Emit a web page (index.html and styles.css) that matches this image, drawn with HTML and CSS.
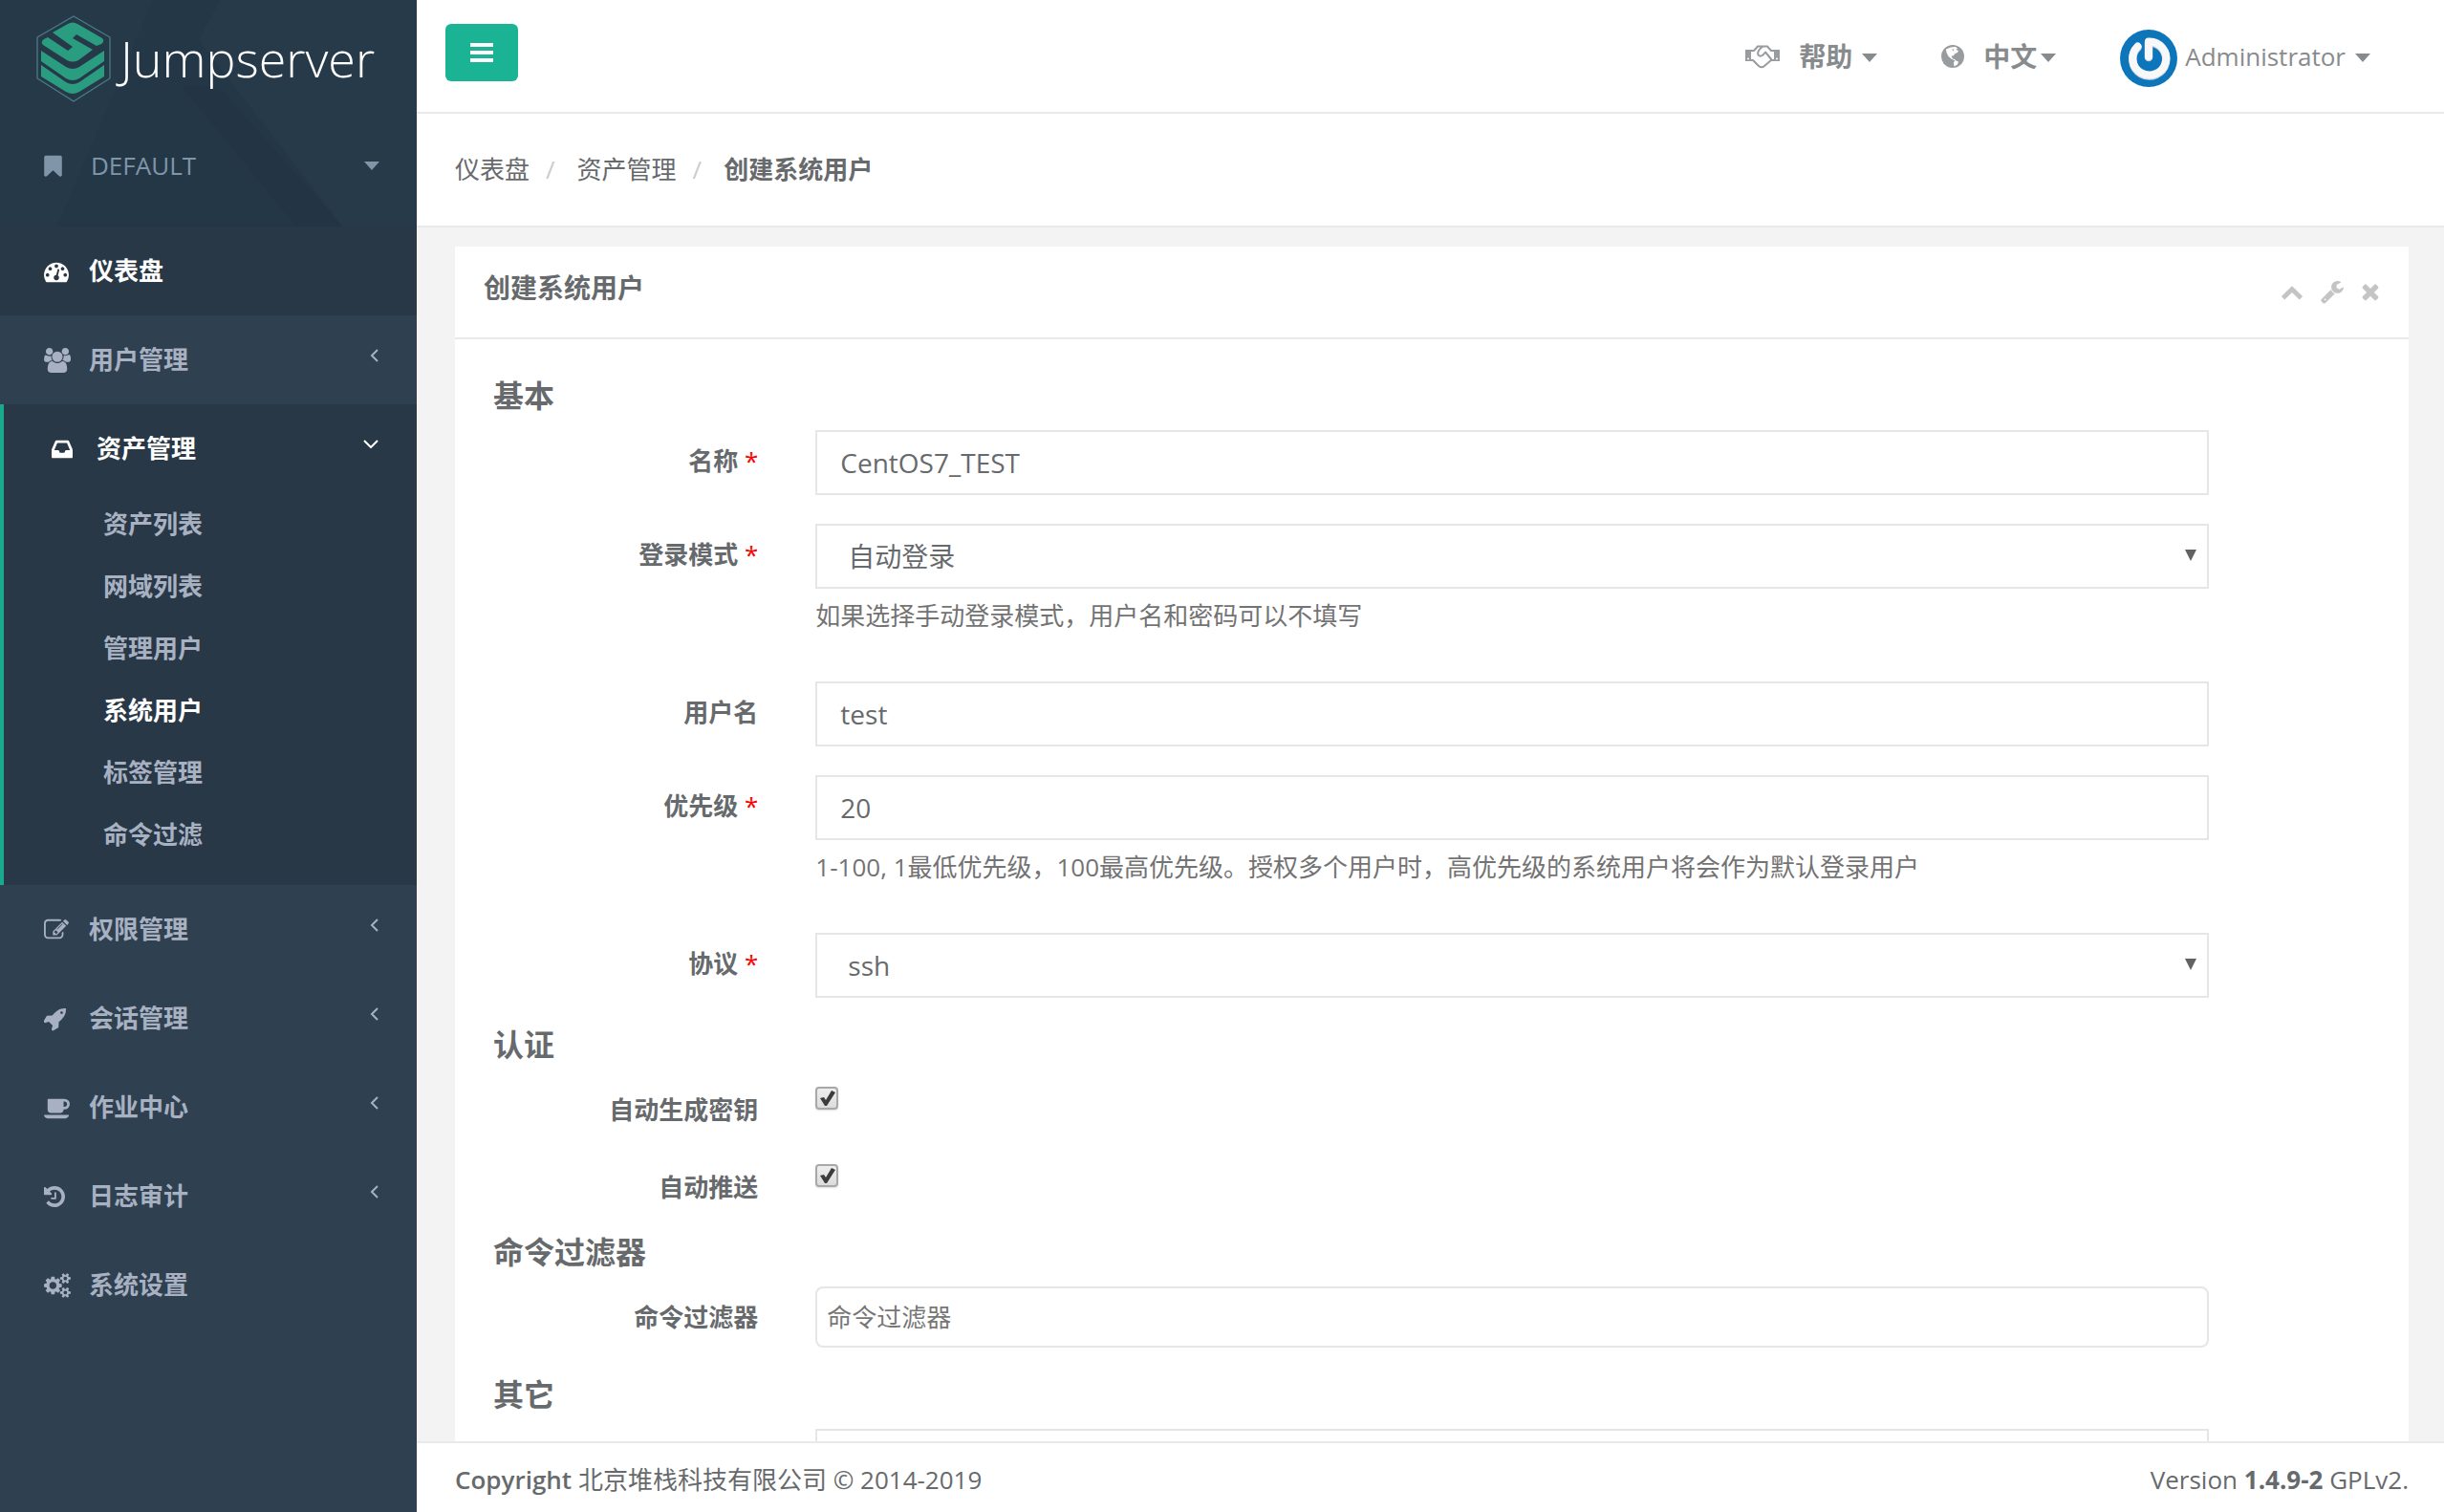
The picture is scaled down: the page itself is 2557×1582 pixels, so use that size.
FILE: index.html
```html
<!DOCTYPE html>
<html lang="zh-CN">
<head>
<meta charset="utf-8">
<title>创建系统用户 - Jumpserver</title>
<link rel="stylesheet" href="styles.css">
</head>
<body>
<div class="app">
  <aside class="sidebar">
    <header class="brand">
      <svg class="brand-bg" viewBox="0 0 436 237" preserveAspectRatio="none" aria-hidden="true">
        <rect width="436" height="237" fill="#243747"/>
        <path d="M230 0H436V237H358L208 42Z" fill="#263a4a"/>
        <path d="M0 0H160L60 237H0Z" fill="#253949"/>
        <path d="M228 90L358 237H310L190 90Z" fill="#233545"/>
      </svg>
      <a class="logo" href="#">
        <svg class="logo-mark" viewBox="0 0 100 104" aria-hidden="true">
          <path d="M47 8L85 30V73L47 97L9 73V30Z" fill="none" stroke="#4b7d86" stroke-width="1.3"/>
          <g fill="#2a9d81">
            <path d="M25 25L41 16Q46 13 51 16L77 31Q80 34 76 37L71 39L50 27L46 31L67 43L52 54Q46 57 40 54L15 38Q12 35 16 32L20 30L41 44L46 40Z"/>
            <path d="M13 44L39 61Q46 65 53 61L79 44V55L53 73Q46 77 39 73L13 55Z"/>
            <path d="M13 59L39 77Q46 81 53 77L79 59V71L53 87Q46 91 39 87L13 71Z"/>
          </g>
        </svg>
        <span class="logo-text">Jumpserver</span>
      </a>
      <button class="org" type="button">
        <svg class="icon" width="19" height="26" viewBox="256 0 1280 1792" aria-hidden="true"><path d="M1420 128q23 0 44 9 33 13 52.500 41t19.500 62v1289q0 34-19.500 62t-52.500 41q-19 8-44 8-48 0-83-32l-441-424-441 424q-36 33-83 33-23 0-44-9-33-13-52.500-41t-19.500-62v-1289q0-34 19.500-62t52.500-41q21-9 44-9h1048z"/></svg>
        <span class="org-name">DEFAULT</span>
        <svg class="caret" viewBox="0 0 16 9" aria-hidden="true"><path d="M0 0H16L8 9Z"/></svg>
      </button>
    </header>
    <nav>
      <ul class="menu">
        <li class="current"><a class="menu-link" href="#"><span class="slot"><svg class="icon" width="26" height="26" viewBox="0 0 1792 1792" aria-hidden="true"><path d="M384 1152q0-53-37.500-90.500t-90.500-37.500-90.500 37.500-37.500 90.500 37.500 90.500 90.500 37.500 90.500-37.500 37.500-90.500zm192-448q0-53-37.500-90.500t-90.500-37.500-90.500 37.500-37.500 90.500 37.500 90.500 90.500 37.500 90.500-37.500 37.500-90.500zm428 481l101-382q6-26-7.500-48.500t-38.500-29.500-48 6.500-30 39.500l-101 382q-60 5-107 43.500t-63 98.500q-20 77 20 146t117 89 146-20 89-117q16-60-6-117t-72-91zm660-33q0-53-37.500-90.500t-90.500-37.500-90.500 37.500-37.500 90.500 37.500 90.500 90.500 37.500 90.500-37.500 37.500-90.500zm-640-640q0-53-37.500-90.500t-90.500-37.500-90.500 37.500-37.500 90.500 37.500 90.500 90.500 37.500 90.500-37.500 37.500-90.500zm448 192q0-53-37.500-90.500t-90.500-37.500-90.500 37.500-37.500 90.500 37.500 90.500 90.500 37.500 90.500-37.500 37.500-90.500zm320 448q0 261-141 483-19 29-54 29h-1402q-35 0-54-29-141-221-141-483 0-182 71-348t191-286 286-191 348-71 348 71 286 191 191 286 71 348z"/></svg></span><span>仪表盘</span></a></li>
        <li><a class="menu-link" href="#"><span class="slot"><svg class="icon" width="28" height="26" viewBox="0 0 1920 1792" aria-hidden="true"><path d="M593 896q-162 5-265 128h-134q-82 0-138-40.500t-56-118.500q0-353 124-353 6 0 43.500 21t97.500 42.500 119 21.500q67 0 133-23-5 37-5 66 0 159 93 291zm1071 637q0 120-73 189.500t-194 69.500h-874q-121 0-194-69.500t-73-189.500q0-53 3.500-103.500t14-109 26.500-108.500 43-97.500 62-81 85.500-53.500 111.500-20q10 0 43 21.500t73 48 107 48 135 21.500 135-21.500 107-48 73-48 43-21.500q61 0 111.500 20t85.500 53.500 62 81 43 97.500 26.500 108.500 14 109 3.500 103.500zm-1024-1277q0 106-75 181t-181 75-181-75-75-181 75-181 181-75 181 75 75 181zm704 384q0 159-112.500 271.500t-271.500 112.500-271.500-112.500-112.500-271.500 112.500-271.500 271.500-112.500 271.500 112.500 112.500 271.500zm576 225q0 78-56 118.500t-138 40.500h-134q-103-123-265-128 93-132 93-291 0-29-5-66 66 23 133 23 59 0 119-21.500t97.500-42.500 43.500-21q124 0 124 353zm-128-609q0 106-75 181t-181 75-181-75-75-181 75-181 181-75 181 75 75 181z"/></svg></span><span>用户管理</span><svg class="arrow" width="9" height="16" viewBox="0 0 9 16" aria-hidden="true"><path d="M8 2L2 8L8 14"/></svg></a></li>
        <li class="open">
          <a class="menu-link" href="#"><span class="slot"><svg class="icon" width="22" height="26" viewBox="128 0 1536 1792" aria-hidden="true"><path d="M1151 960h316q-1-3-2.500-8.500t-2.500-7.500l-212-496h-708l-212 496q-1 3-2.500 8.500t-2.500 7.500h316l95 192h320zm513 30v482q0 26-19 45t-45 19h-1408q-26 0-45-19t-19-45v-482q0-62 25-123l238-552q10-25 36.500-42t52.500-17h832q26 0 52.500 17t36.500 42l238 552q25 61 25 123z"/></svg></span><span>资产管理</span><svg class="arrow" width="16" height="9" viewBox="0 0 16 9" aria-hidden="true"><path d="M1 1L8 8L15 1"/></svg></a>
          <ul class="submenu">
            <li><a href="#">资产列表</a></li>
            <li><a href="#">网域列表</a></li>
            <li><a href="#">管理用户</a></li>
            <li><a class="selected" href="#">系统用户</a></li>
            <li><a href="#">标签管理</a></li>
            <li><a href="#">命令过滤</a></li>
          </ul>
        </li>
        <li><a class="menu-link" href="#"><span class="slot"><svg class="icon" width="26" height="26" viewBox="0 0 1792 1792" aria-hidden="true"><path d="M888 1184l116-116-152-152-116 116v56h96v96h56zm440-720q-16-16-33 1l-350 350q-17 17-1 33t33-1l350-350q17-17 1-33zm80 594v190q0 119-84.500 203.500t-203.500 84.500h-832q-119 0-203.500-84.500t-84.500-203.500v-832q0-119 84.500-203.500t203.500-84.500h832q63 0 117 25 15 7 18 23 3 17-9 29l-49 49q-14 14-32 8-23-6-45-6h-832q-66 0-113 47t-47 113v832q0 66 47 113t113 47h832q66 0 113-47t47-113v-126q0-13 9-22l64-64q15-15 35-7t20 29zm-96-738l288 288-672 672h-288v-288zm444 132l-92 92-288-288 92-92q28-28 68-28t68 28l152 152q28 28 28 68t-28 68z"/></svg></span><span>权限管理</span><svg class="arrow" width="9" height="16" viewBox="0 0 9 16" aria-hidden="true"><path d="M8 2L2 8L8 14"/></svg></a></li>
        <li><a class="menu-link" href="#"><span class="slot"><svg class="icon" width="24" height="26" viewBox="64 0 1664 1792" aria-hidden="true"><path d="M1440 448q0-40-28-68t-68-28-68 28-28 68 28 68 68 28 68-28 28-68zm224-288q0 249-75.500 430.500t-253.500 360.500q-81 80-195 176l-20 379q-2 16-16 26l-384 224q-7 4-16 4-12 0-23-9l-64-64q-13-14-8-32l85-276-281-281-276 85q-3 1-9 1-14 0-23-9l-64-64q-17-19-5-39l224-384q10-14 26-16l379-20q96-114 176-195 188-187 358-258t431-71q14 0 24 9.500t10 22.500z"/></svg></span><span>会话管理</span><svg class="arrow" width="9" height="16" viewBox="0 0 9 16" aria-hidden="true"><path d="M8 2L2 8L8 14"/></svg></a></li>
        <li><a class="menu-link" href="#"><span class="slot"><svg class="icon" width="28" height="26" viewBox="0 0 1920 1792" aria-hidden="true"><path d="M1664 640q0-80-56-136t-136-56h-64v384h64q80 0 136-56t56-136zm-1664 768h1792q0 106-75 181t-181 75h-1280q-106 0-181-75t-75-181zm1856-768q0 159-112.500 271.500t-271.500 112.500h-64v32q0 92-66 158t-158 66h-704q-92 0-158-66t-66-158v-736q0-26 19-45t45-19h1152q159 0 271.500 112.500t112.500 271.500z"/></svg></span><span>作业中心</span><svg class="arrow" width="9" height="16" viewBox="0 0 9 16" aria-hidden="true"><path d="M8 2L2 8L8 14"/></svg></a></li>
        <li><a class="menu-link" href="#"><span class="slot"><svg class="icon" width="22" height="26" viewBox="128 0 1536 1792" aria-hidden="true"><path d="M1664 896q0 156-61 298t-164 245-245 164-298 61q-172 0-327-72.500t-264-204.500q-7-10-6.500-22.500t8.500-20.500l137-138q10-9 25-9 16 2 23 12 73 95 179 147t225 52q104 0 198.500-40.500t163.500-109.500 109.500-163.500 40.500-198.500-40.500-198.500-109.500-163.500-163.500-109.500-198.500-40.500q-98 0-188 35.500t-160 101.500l137 138q31 30 14 69-17 40-59 40h-448q-26 0-45-19t-19-45v-448q0-42 40-59 39-17 69 14l130 129q107-101 244.500-156.500t284.500-55.500q156 0 298 61t245 164 164 245 61 298zm-640-288v448q0 14-9 23t-23 9h-320q-14 0-23-9t-9-23v-64q0-14 9-23t23-9h224v-352q0-14 9-23t23-9h64q14 0 23 9t9 23z"/></svg></span><span>日志审计</span><svg class="arrow" width="9" height="16" viewBox="0 0 9 16" aria-hidden="true"><path d="M8 2L2 8L8 14"/></svg></a></li>
        <li><a class="menu-link" href="#"><span class="slot"><svg class="icon" width="28" height="26" viewBox="0 0 1920 1792" aria-hidden="true"><path d="M896 896q0-106-75-181t-181-75-181 75-75 181 75 181 181 75 181-75 75-181zm768 512q0-52-38-90t-90-38-90 38-38 90q0 53 37.500 90.500t90.500 37.500 90.500-37.500 37.500-90.500zm0-1024q0-52-38-90t-90-38-90 38-38 90q0 53 37.500 90.500t90.500 37.500 90.500-37.500 37.500-90.500zm-384 421v185q0 10-7 19.500t-16 10.500l-155 24q-11 35-32 76 34 48 90 115 7 11 7 20 0 12-7 19-23 30-82.500 89.500t-78.500 59.500q-11 0-21-7l-115-90q-37 19-77 31-11 108-23 155-7 24-30 24h-186q-11 0-20-7.500t-10-17.500l-23-153q-34-10-75-31l-118 89q-7 7-20 7-11 0-21-8-144-133-144-160 0-9 7-19 10-14 41-53t47-61q-23-44-35-82l-152-24q-10-1-17-9.500t-7-19.500v-185q0-10 7-19.500t16-10.500l155-24q11-35 32-76-34-48-90-115-7-11-7-20 0-12 7-20 22-30 82-89t79-59q11 0 21 7l115 90q34-18 77-32 11-108 23-154 7-24 30-24h186q11 0 20 7.500t10 17.500l23 153q34 10 75 31l118-89q8-7 20-7 11 0 21 8 144 133 144 160 0 8-7 19-12 16-42 54t-45 60q23 48 34 82l152 23q10 2 17 10.500t7 19.500zm640 533v140q0 16-149 31-12 27-30 52 51 113 51 138 0 4-4 7-122 71-124 71-8 0-46-47t-52-68q-20 2-30 2t-30-2q-14 21-52 68t-46 47q-2 0-124-71-4-3-4-7 0-25 51-138-18-25-30-52-149-15-149-31v-140q0-16 149-31 13-29 30-52-51-113-51-138 0-4 4-7 4-2 35-20t59-34 30-16q8 0 46 46.500t52 67.500q20-2 30-2t30 2q51-71 92-112l6-2q4 0 124 70 4 3 4 7 0 25-51 138 17 23 30 52 149 15 149 31zm0-1024v140q0 16-149 31-12 27-30 52 51 113 51 138 0 4-4 7-122 71-124 71-8 0-46-47t-52-68q-20 2-30 2t-30-2q-14 21-52 68t-46 47q-2 0-124-71-4-3-4-7 0-25 51-138-18-25-30-52-149-15-149-31v-140q0-16 149-31 13-29 30-52-51-113-51-138 0-4 4-7 4-2 35-20t59-34 30-16q8 0 46 46.500t52 67.500q20-2 30-2t30 2q51-71 92-112l6-2q4 0 124 70 4 3 4 7 0 25-51 138 17 23 30 52 149 15 149 31z"/></svg></span><span>系统设置</span></a></li>
      </ul>
    </nav>
  </aside>

  <div class="main">
    <header class="topbar">
      <button class="toggle" type="button" aria-label="切换菜单">
        <svg width="24" height="20" viewBox="0 0 24 20" aria-hidden="true"><path d="M0 0H24V4H0ZM0 8H24V12H0ZM0 16H24V20H0Z" fill="#fff"/></svg>
      </button>
      <nav class="tools">
        <a class="tool help" href="#">
          <svg width="36" height="26" viewBox="0 0 36 26" aria-hidden="true">
            <g fill="#999c9e"><path d="M0 6H6V18H0ZM30 6H36V18H30Z"/></g>
            <g fill="#fff"><circle cx="3" cy="15.500" r="1"/><circle cx="33" cy="15.500" r="1"/></g>
            <path d="M6 7H9L13 2.500H23L27 7H30M6 17H8L14 23Q17 25.500 20 23L27 17H30M18 3Q12 7 13.500 11.500Q16 14 19 11L21 8.500L27.500 16.500" fill="none" stroke="#999c9e" stroke-width="2" stroke-linejoin="round"/>
          </svg>
          <strong>帮助</strong>
          <svg class="caret" viewBox="0 0 16 9" aria-hidden="true"><path d="M0 0H16L8 9Z"/></svg>
        </a>
        <a class="tool lang" href="#">
          <svg width="24" height="24" viewBox="0 0 24 24" aria-hidden="true">
            <circle cx="12" cy="12" r="12" fill="#999c9e"/>
            <path d="M5 4.500L10 2.500L15 2L17 3.500L15.500 5L18 6L17 8L14.500 9L12.500 11.500L10.500 11.500L12 14.500L14 15L15.500 17L10.500 14.500L7.500 12L5.500 8ZM14.500 16L18 17.500L17 20.500L13.500 22.500L13 18.500Z" fill="#fff"/>
            <path d="M11 4.500L13.500 4.500L12.500 6.500Z" fill="#999c9e"/>
          </svg>
          <strong>中文</strong>
          <svg class="caret" viewBox="0 0 16 9" aria-hidden="true"><path d="M0 0H16L8 9Z"/></svg>
        </a>
        <a class="tool user" href="#">
          <svg class="avatar" viewBox="0 0 60 60" aria-hidden="true">
            <circle cx="30" cy="30" r="30" fill="#0d76bb"/>
            <path d="M18.500 17.500A17.500 17.500 0 1 0 30 12.500V28" transform="translate(0 1)" fill="none" stroke="#c9d3dc" stroke-width="8.500" stroke-linecap="round" stroke-linejoin="round"/>
            <path d="M18.500 17.500A17.500 17.500 0 1 0 30 12.500V28" fill="none" stroke="#f7f8f9" stroke-width="8" stroke-linecap="round" stroke-linejoin="round"/>
          </svg>
          <span>Administrator</span>
          <svg class="caret" viewBox="0 0 16 9" aria-hidden="true"><path d="M0 0H16L8 9Z"/></svg>
        </a>
      </nav>
    </header>

    <nav class="crumbs" aria-label="面包屑">
      <ol>
        <li><a href="#">仪表盘</a></li>
        <li><a href="#">资产管理</a></li>
        <li><strong>创建系统用户</strong></li>
      </ol>
    </nav>

    <main class="content">
      <section class="panel">
        <header class="panel-head">
          <h1>创建系统用户</h1>
          <div class="panel-tools">
            <button type="button" aria-label="折叠"><svg class="icon" width="24" height="24" viewBox="64 0 1664 1792" aria-hidden="true"><path d="M1683 1331l-166 165q-19 19-45 19t-45-19l-531-531-531 531q-19 19-45 19t-45-19l-166-165q-19-19-19-45.500t19-45.500l742-741q19-19 45-19t45 19l742 741q19 19 19 45.500t-19 45.500z"/></svg></button>
            <button type="button" aria-label="设置"><svg class="icon" width="24" height="26" viewBox="64 0 1664 1792" aria-hidden="true"><path d="M448 1472q0-26-19-45t-45-19-45 19-19 45 19 45 45 19 45-19 19-45zm644-420l-682 682q-37 37-90 37-52 0-91-37l-106-108q-38-36-38-90 0-53 38-91l681-681q39 98 114.500 173.500t173.500 114.500zm634-435q0 39-23 106-47 134-164.500 217.500t-258.500 83.500q-185 0-316.500-131.500t-131.500-316.500 131.500-316.500 316.500-131.500q58 0 121.500 16.500t107.500 46.500q16 11 16 28t-16 28l-293 169v224l193 107q5-3 79-48.500t135.500-81 70.500-35.500q15 0 23.500 10t8.500 25z"/></svg></button>
            <button type="button" aria-label="关闭"><svg class="icon" width="20" height="26" viewBox="192 0 1408 1792" aria-hidden="true"><path d="M1490 1322q0 40-28 68l-136 136q-28 28-68 28t-68-28l-294-294-294 294q-28 28-68 28t-68-28l-136-136q-28-28-28-68t28-68l294-294-294-294q-28-28-28-68t28-68l136-136q28-28 68-28t68 28l294 294 294-294q28-28 68-28t68 28l136 136q28 28 28 68t-28 68l-294 294 294 294q28 28 28 68z"/></svg></button>
          </div>
        </header>
        <form class="form">
          <h3>基本</h3>
          <div class="row">
            <label for="name">名称 <span class="req">*</span></label>
            <div class="field"><input class="control" id="name" type="text" value="CentOS7_TEST"></div>
          </div>
          <div class="row">
            <label for="mode">登录模式 <span class="req">*</span></label>
            <div class="field">
              <div class="select"><select class="control" id="mode"><option>自动登录</option></select></div>
              <p class="hint">如果选择手动登录模式，用户名和密码可以不填写</p>
            </div>
          </div>
          <div class="row">
            <label for="username">用户名</label>
            <div class="field"><input class="control" id="username" type="text" value="test"></div>
          </div>
          <div class="row">
            <label for="priority">优先级 <span class="req">*</span></label>
            <div class="field">
              <input class="control" id="priority" type="text" inputmode="numeric" value="20">
              <p class="hint">1-100, 1最低优先级，100最高优先级。授权多个用户时，高优先级的系统用户将会作为默认登录用户</p>
            </div>
          </div>
          <div class="row">
            <label for="protocol">协议 <span class="req">*</span></label>
            <div class="field">
              <div class="select"><select class="control" id="protocol"><option>ssh</option></select></div>
            </div>
          </div>
          <h3>认证</h3>
          <div class="row">
            <label for="autokey">自动生成密钥</label>
            <div class="field check"><input id="autokey" type="checkbox" checked><svg viewBox="0 0 24 24" aria-hidden="true"><path d="M5 12L9 11L11 14L17 4L21 6L12 20L10 20Z"/></svg></div>
          </div>
          <div class="row">
            <label for="autopush">自动推送</label>
            <div class="field check"><input id="autopush" type="checkbox" checked><svg viewBox="0 0 24 24" aria-hidden="true"><path d="M5 12L9 11L11 14L17 4L21 6L12 20L10 20Z"/></svg></div>
          </div>
          <h3>命令过滤器</h3>
          <div class="row">
            <label for="filters">命令过滤器</label>
            <div class="field"><input class="control tags" id="filters" type="text" placeholder="命令过滤器"></div>
          </div>
          <h3 id="other">其它</h3>
          <div class="row">
            <div class="field wide"><textarea class="control" aria-labelledby="other" rows="4"></textarea></div>
          </div>
        </form>
      </section>
    </main>

    <footer class="footer">
      <p><strong>Copyright</strong> 北京堆栈科技有限公司 © 2014-2019</p>
      <p>Version <strong class="version">1.4.9-2</strong> GPLv2.</p>
    </footer>
  </div>
</div>
</body>
</html>
```

FILE: styles.css
```css
* {
  box-sizing: border-box;
}

body {
  margin: 0;
  background: #2f4050;
  color: #676a6c;
  font-family: "Open Sans", "Noto Sans CJK SC", sans-serif;
  font-size: 26px;
  line-height: 37px;
}

a {
  color: inherit;
  text-decoration: none;
}

ul,
ol {
  margin: 0;
  padding: 0;
  list-style: none;
}

p {
  margin: 0;
}

button {
  padding: 0;
  border: 0;
  background: none;
  color: inherit;
  font: inherit;
  cursor: pointer;
}

svg {
  display: block;
  flex: none;
}

.icon {
  fill: currentColor;
}

.caret {
  width: 16px;
  height: 9px;
  fill: currentColor;
}

.app {
  display: flex;
  height: 100vh;
}

/* Sidebar */

.sidebar {
  flex: none;
  width: 436px;
  overflow: hidden;
  background: #2f4050;
  color: #a7b1c2;
  font-weight: 700;
}

.brand {
  position: relative;
  height: 237px;
}

.brand-bg {
  position: absolute;
  inset: 0;
  width: 100%;
  height: 100%;
}

.logo {
  position: relative;
  display: flex;
  align-items: center;
  padding: 9px 0 0 30px;
  color: #fff;
}

.logo-mark {
  width: 100px;
  height: 104px;
}

.logo-text {
  margin-left: -4px;
  font-size: 52px;
  font-weight: 300;
  line-height: 72px;
}

.org {
  position: relative;
  display: flex;
  align-items: center;
  width: 100%;
  margin-top: 42px;
  padding: 0 39px 0 46px;
  color: #8095a8;
  font-weight: 400;
}

.org-name {
  flex: 1;
  margin-left: 30px;
  text-align: left;
}

.menu-link {
  display: flex;
  align-items: center;
  height: 93px;
  padding: 0 40px 0 46px;
}

.slot {
  width: 47px;
}

.arrow {
  margin: 0 0 10px auto;
  fill: none;
  stroke: currentColor;
  stroke-width: 2;
}

.current {
  background: #293846;
  color: #fff;
}

.open {
  padding-bottom: 20px;
  border-left: 4px solid #19aa8d;
  background: #293846;
}

.open .menu-link {
  padding-left: 50px;
  color: #fff;
}

.submenu a {
  display: block;
  padding: 14px 20px 14px 104px;
}

.submenu .selected {
  color: #fff;
}

/* Main column */

.main {
  display: flex;
  flex: 1;
  flex-direction: column;
  min-width: 0;
  background: #f3f3f4;
}

.topbar {
  display: flex;
  flex: none;
  justify-content: space-between;
  height: 119px;
  padding: 0 77px 0 30px;
  border-bottom: 2px solid #e7eaec;
  background: #fff;
}

.toggle {
  display: flex;
  align-items: center;
  justify-content: center;
  width: 76px;
  height: 60px;
  margin-top: 25px;
  border-radius: 6px;
  background: #1ab394;
}

.tools {
  display: flex;
  gap: 67px;
  padding-top: 1px;
  color: #888b8d;
}

.tool {
  display: flex;
  align-items: center;
}

.tool strong {
  font-size: 28px;
}

.tool .caret {
  margin-top: 3px;
}

.avatar {
  width: 60px;
  height: 60px;
  margin-top: 4px;
}

.help strong {
  margin: 0 10px 0 20px;
}

.lang strong {
  margin: 0 4px 0 20px;
}

.user span {
  margin: 0 10px 0 8px;
}

.crumbs {
  flex: none;
  padding: 40px;
  border-bottom: 2px solid #e7eaec;
  background: #fff;
}

.crumbs ol {
  display: flex;
}

.crumbs li + li::before {
  margin: 0 23px 0 17px;
  color: #ccc;
  content: "/";
}

.content {
  flex: 1;
  min-height: 0;
  overflow-y: auto;
  padding: 20px 37px 20px 40px;
  scrollbar-width: none;
}

/* Form panel */

.panel {
  background: #fff;
}

.panel-head {
  display: flex;
  align-items: center;
  justify-content: space-between;
  height: 97px;
  padding: 0 30px;
  border-bottom: 2px solid #e7eaec;
}

.panel-head h1 {
  margin: 0 0 8px;
  font-size: 28px;
  font-weight: 600;
}

.panel-tools {
  display: flex;
  align-items: center;
  gap: 18px;
  margin-bottom: 2px;
  color: #c4c4c4;
}

.form {
  padding: 40px 10px;
}

.form h3 {
  margin: 0 30px 18px;
  font-size: 32px;
  font-weight: 600;
  line-height: 37px;
}

.row {
  display: grid;
  grid-template-columns: 2fr 9fr 1fr;
  margin-bottom: 30px;
}

.row label {
  padding: 14px 30px 0 0;
  font-weight: 700;
  text-align: right;
}

.req {
  color: #f00;
  font-weight: 400;
}

.field {
  padding: 0 30px;
}

.field.wide {
  grid-column: 2;
}

.control {
  display: block;
  width: 100%;
  height: 68px;
  padding: 0 24px;
  border: 2px solid #e5e6e7;
  border-radius: 0;
  outline: 0;
  background: #fff;
  color: inherit;
  font: inherit;
  font-size: 28px;
}

textarea.control {
  height: 160px;
  padding: 12px 24px;
}

.select {
  position: relative;
}

.select select {
  padding-left: 32px;
  appearance: none;
}

.select::after {
  position: absolute;
  top: 27px;
  right: 13px;
  border: 6px solid transparent;
  border-top: 12px solid #606263;
  border-bottom: 0;
  content: "";
  pointer-events: none;
}

.hint {
  margin: 10px 0 20px;
  color: #737373;
}

.control.tags {
  height: 64px;
  padding: 0 10px;
  border-radius: 8px;
  font-size: 26px;
}

.tags::placeholder {
  color: #777;
  opacity: 1;
}

.check {
  position: relative;
  padding-top: 8px;
}

.check input {
  display: block;
  width: 24px;
  height: 24px;
  margin: 0;
  border: 2px solid #a8a8a8;
  border-radius: 4px;
  background: linear-gradient(#eee, #dcdcdc);
  box-shadow: 0 1px 2px #ddd;
  appearance: none;
}

.check svg {
  position: absolute;
  top: 8px;
  left: 30px;
  width: 24px;
  height: 24px;
  fill: #3c3c3c;
  pointer-events: none;
}

.footer {
  display: flex;
  flex: none;
  justify-content: space-between;
  padding: 20px 37px 15px 40px;
  border-top: 2px solid #e7eaec;
  background: #fff;
}

.footer strong {
  font-weight: 600;
}

.footer .version {
  font-weight: 700;
}
```
